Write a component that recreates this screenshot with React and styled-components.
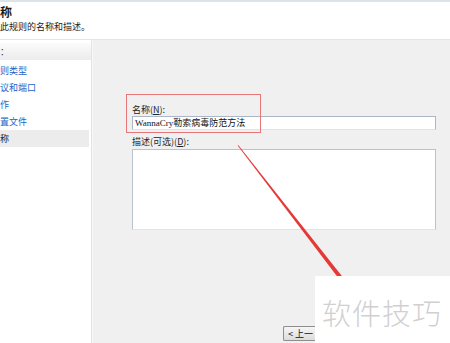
import React from "react";
import styled, { createGlobalStyle } from "styled-components";

const GlobalStyle = createGlobalStyle`
  html, body {
    margin: 0;
    padding: 0;
    width: 450px;
    height: 343px;
    overflow: hidden;
    background: #f0f0f0;
    font-family: "Noto Sans CJK SC", "Liberation Sans", sans-serif;
  }
`;

const navItems = [
  { label: "则类型" },
  { label: "议和端口" },
  { label: "作" },
  { label: "置文件" },
  { label: "称", active: true },
];

const App = () => {
  return (
    <>
      <GlobalStyle />
      <Window>
        <Header>
          <Title>称</Title>
          <Subtitle>此规则的名称和描述。</Subtitle>
        </Header>

        <Body>
          <Sidebar>
            <SideHead>：</SideHead>
            {navItems.map((item) => (
              <NavItem key={item.label} $active={item.active}>
                {item.label}
              </NavItem>
            ))}
          </Sidebar>

          <Content>
            <Form>
              <Label>
                名称(<u>N</u>):
              </Label>
              <TextInput>WannaCry勒索病毒防范方法</TextInput>
              <Label $gap>
                描述(可选)(<u>D</u>):
              </Label>
              <TextArea />
            </Form>

            <Footer>
              <Button>&lt; 上一</Button>
            </Footer>

            <Highlight />
          </Content>
        </Body>

        <Arrow width="450" height="343" viewBox="0 0 450 343">
          <polygon
            points="237.6,145.6 238.4,145.2 347.8,283.6 344.6,286.2"
            fill="#e53935"
          />
        </Arrow>

        <Watermark>软件技巧</Watermark>
      </Window>
    </>
  );
};

export default App;

const Window = styled.div`
  position: relative;
  width: 450px;
  height: 343px;
  display: flex;
  flex-direction: column;
  overflow: hidden;
`;

const Header = styled.div`
  height: 37px;
  background: #fff;
  border-top: 2px solid #dde3ea;
  border-bottom: 1px solid #e4e4e4;
  display: flex;
  flex-direction: column;
`;

const Title = styled.div`
  font-size: 12px;
  font-weight: 700;
  line-height: 14px;
  margin-top: 3px;
  color: #1a1a1a;
`;

const Subtitle = styled.div`
  font-size: 9px;
  line-height: 12px;
  margin-top: 2px;
  color: #222;
`;

const Body = styled.div`
  flex: 1;
  display: flex;
  min-height: 0;
`;

const Sidebar = styled.div`
  width: 91px;
  background: #fff;
  border-right: 1px solid #e2e2e2;
  box-shadow: 1px 0 0 #f8f8f8;
  padding-top: 3px;
  display: flex;
  flex-direction: column;
`;

const SideHead = styled.div`
  height: 17px;
  line-height: 17px;
  font-size: 9px;
  color: #333;
  background: linear-gradient(#fbfbfb, #ececec);
  margin-bottom: 2px;
`;

const NavItem = styled.div`
  height: 17px;
  line-height: 17px;
  font-size: 9px;
  color: ${(p) => (p.$active ? "#222" : "#1f63c4")};
  background: ${(p) => (p.$active ? "#ececec" : "transparent")};
  margin-right: 2px;
`;

const Content = styled.div`
  position: relative;
  flex: 1;
  margin-left: 1px;
  background: #f0f0f0;
  display: flex;
  flex-direction: column;
`;

const Form = styled.div`
  padding: 64px 14px 0 39px;
  display: flex;
  flex-direction: column;
`;

const Label = styled.div`
  font-size: 9px;
  line-height: 12px;
  color: #222;
  margin-top: ${(p) => (p.$gap ? "6px" : "0")};
  margin-bottom: ${(p) => (p.$gap ? "1px" : "0")};

  u {
    text-decoration: underline;
  }
`;

const TextInput = styled.div`
  height: 12px;
  background: #fff;
  border: 1px solid #abb7c6;
  border-bottom-color: #e0e4ea;
  font-family: "Liberation Serif", "Noto Sans CJK SC", serif;
  font-size: 9px;
  line-height: 12px;
  padding-left: 2px;
  color: #111;
  white-space: nowrap;
`;

const TextArea = styled.div`
  height: 79px;
  background: #fff;
  border: 1px solid #b9c3cf;
  border-bottom-color: #e0e4ea;
`;

const Footer = styled.div`
  margin-top: auto;
  display: flex;
  padding: 0 0 1px 190px;
`;

const Button = styled.div`
  width: 30px;
  height: 13px;
  padding-left: 4px;
  border: 1px solid #8e8e8e;
  border-right: none;
  border-radius: 2px 0 0 2px;
  background: linear-gradient(#f6f6f6, #dcdcdc);
  font-size: 9px;
  line-height: 13px;
  color: #111;
  white-space: nowrap;
  overflow: hidden;
  margin-bottom: 1px;
`;

const Highlight = styled.div`
  position: absolute;
  left: 33px;
  top: 54px;
  width: 133px;
  height: 37px;
  border: 1.5px solid #e8777a;
`;

const Arrow = styled.svg`
  position: absolute;
  left: 0;
  top: 0;
  pointer-events: none;
`;

const Watermark = styled.div`
  position: absolute;
  left: 315px;
  top: 276px;
  right: 0;
  bottom: 0;
  background: #fff;
  color: #d0d0d0;
  font-size: 29px;
  font-weight: 300;
  line-height: 30px;
  padding: 21px 0 0 7px;
  letter-spacing: 1px;
  white-space: nowrap;
`;
